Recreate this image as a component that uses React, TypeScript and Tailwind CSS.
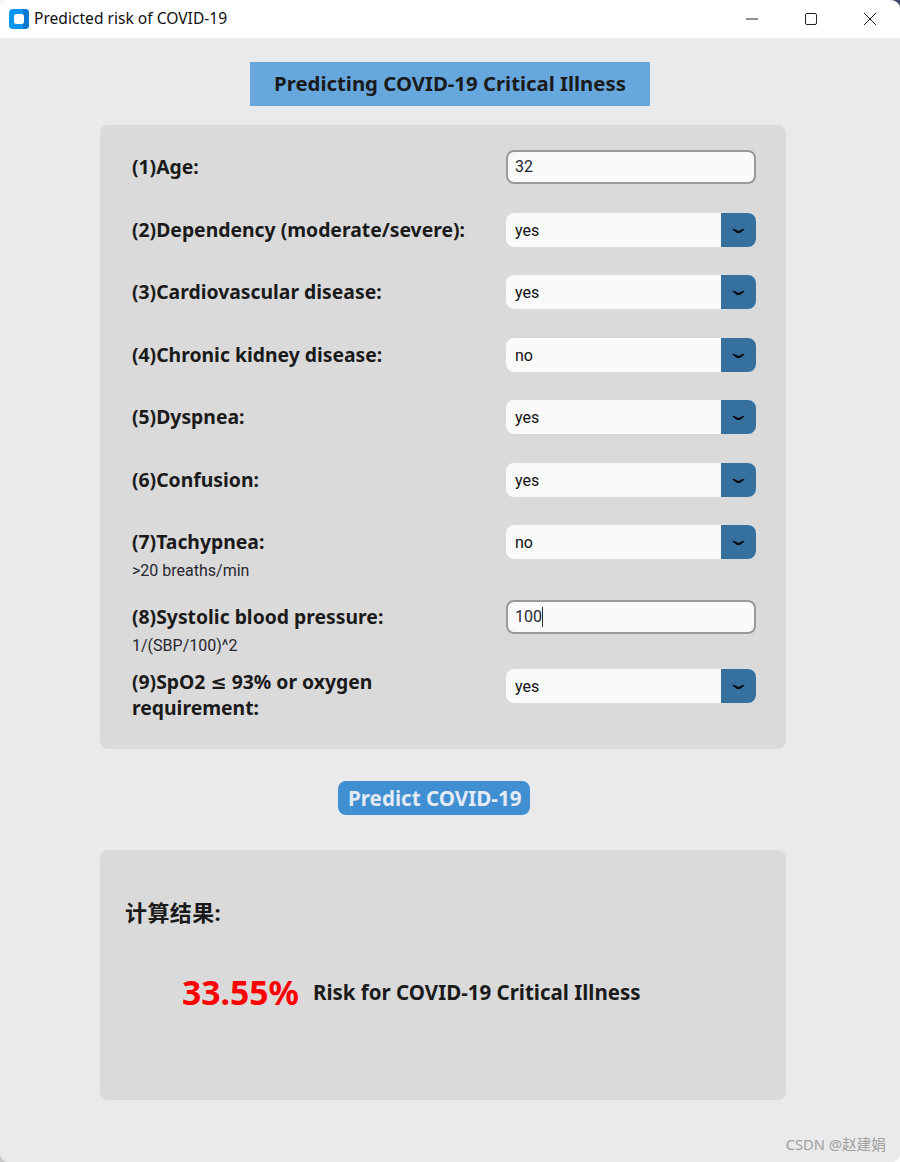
const yahei = 'font-["Noto_Sans","Noto_Sans_CJK_SC",sans-serif]';

const rows = [
  { label: '(1)Age:', kind: 'input', value: '32', h: 'h-[63px]' },
  { label: '(2)Dependency (moderate/severe):', kind: 'select', value: 'yes', h: 'h-[62px]' },
  { label: '(3)Cardiovascular disease:', kind: 'select', value: 'yes', h: 'h-[63px]' },
  { label: '(4)Chronic kidney disease:', kind: 'select', value: 'no', h: 'h-[62px]' },
  { label: '(5)Dyspnea:', kind: 'select', value: 'yes', h: 'h-[63px]' },
  { label: '(6)Confusion:', kind: 'select', value: 'yes', h: 'h-[62px]' },
  { label: '(7)Tachypnea:', note: '>20 breaths/min', kind: 'select', value: 'no', h: 'h-[75px]' },
  { label: '(8)Systolic blood pressure:', note: '1/(SBP/100)^2', kind: 'input', value: '100', caret: true, h: 'h-[69px]' },
];

function Field({ kind, value, caret }: { kind: string; value: string; caret?: boolean }) {
  if (kind === 'input') {
    return (
      <div className="w-[250px] h-[34px] shrink-0 bg-[#fafafa] border-2 border-[#9a9a9e] rounded-lg flex items-center pl-[7px] font-['Roboto',sans-serif] text-[16px] text-[#262730]">
        {value}
        {caret && <span className="w-px h-[20px] bg-[#333]" />}
      </div>
    );
  }
  return (
    <div className="w-[250px] h-[34px] shrink-0 bg-[#fafafa] rounded-lg flex overflow-hidden">
      <div className="flex-1 flex items-center pl-[9px] pt-[2px] font-['Roboto',sans-serif] text-[16px] text-[#111]">{value}</div>
      <div className="w-[35px] bg-[#36709f] flex items-center justify-center">
        <svg width="13" height="6" viewBox="0 0 13 6" fill="none" className="mt-[2px]">
          <path d="M0.5 0.5 L3.5 1.5 L6.5 3 L9.5 1.5 L12.5 0.5 L12 2 L8 5 L5 5 L1 2 Z" fill="#0a0a14" />
        </svg>
      </div>
    </div>
  );
}

export default function App() {
  return (
    <div className={`h-[1162px] bg-[#eaeaea] relative overflow-hidden ${yahei}`}>
      <div className="h-[38px] bg-white flex items-center">
        <svg width="20" height="20" viewBox="0 0 20 20" className="ml-[9px] mb-[1px]">
          <rect width="20" height="20" rx="4" fill="#0a94f2" />
          <path d="M16 0h0a4 4 0 0 1 4 4v12a4 4 0 0 1-4 4h-2V0z" fill="#0a78cf" />
          <rect x="5" y="5" width="10" height="10" rx="2.5" fill="#fff" />
        </svg>
        <span className="ml-[5px] text-[15.6px] text-[#111]">Predicted risk of COVID-19</span>
        <div className="ml-auto flex items-center">
          <svg width="12" height="12" viewBox="0 0 12 12" className="mr-[47px]"><path d="M0 6H12" stroke="#222" /></svg>
          <svg width="12" height="12" viewBox="0 0 12 12" className="mr-[47px]"><rect x=".5" y=".5" width="11" height="11" rx="1.5" fill="none" stroke="#222" /></svg>
          <svg width="12" height="12" viewBox="0 0 12 12" className="mr-[24px]"><path d="M0 0L12 12M12 0L0 12" stroke="#222" /></svg>
        </div>
      </div>

      <div className="flex justify-center mt-6">
        <div className="w-[400px] h-[44px] bg-[#66a8de] flex items-center justify-center pb-[2px] text-[20.35px] font-bold text-[#1a1a1a]">
          Predicting COVID-19 Critical Illness
        </div>
      </div>

      <div className="ml-[100px] w-[686px] mt-[19px] h-[624px] bg-[#dadada] rounded-lg pt-[25px] pl-[31px]">
        {rows.map((r) => (
          <div key={r.label} className={`flex ${r.h}`}>
            <div className="w-[375px] shrink-0 pl-px">
              <div className="text-[19.35px] font-bold leading-[26px] pt-1 text-[#1a1a1a]">{r.label}</div>
              {r.note && <div className="font-['Roboto',sans-serif] text-[16px] leading-5 mt-[6px] text-[#262730]">{r.note}</div>}
            </div>
            <Field kind={r.kind} value={r.value} caret={r.caret} />
          </div>
        ))}
        <div className="flex h-[80px]">
          <div className="w-[375px] shrink-0 pl-px pr-[100px]">
            <div className="font-['Noto_Sans','DejaVu_Sans',sans-serif] text-[19.35px] font-bold leading-[26px] text-[#1a1a1a]">
              (9)SpO2 ≤ 93% or oxygen requirement:
            </div>
          </div>
          <Field kind="select" value="yes" />
        </div>
      </div>

      <div className="ml-[338px] mt-[32px] w-[192px] h-[34px] bg-[#3f8fd2] rounded-lg flex items-center pl-[10px] text-[20.6px] font-bold text-[#e3eaf5]">
        Predict COVID-19
      </div>

      <div className="ml-[100px] w-[686px] mt-[35px] h-[250px] bg-[#dadada] rounded-lg pl-[25px] pt-[46px]">
        <div className="text-[22px] font-bold leading-[32px] tracking-[0.4px] text-[#1a1a1a]">计算结果:</div>
        <div className="flex items-center ml-[57px] mt-[40px] h-[48px]">
          <span className="text-[33.7px] font-bold text-[#ff0000]">33.55%</span>
          <span className="ml-[14px] text-[20.5px] font-bold text-[#1a1a1a]">Risk for COVID-19 Critical Illness</span>
        </div>
      </div>

      <div className="absolute right-[14px] bottom-[7px] text-[14.7px] text-[#a0a0a0]">CSDN @赵建娟</div>

      {/* window corners */}
      <svg width="8" height="8" viewBox="0 0 8 8" className="absolute left-0 top-0"><path d="M0 0H8A8 8 0 0 0 0 8Z" fill="#f4f4f4" /></svg>
      <svg width="10" height="8" viewBox="0 0 10 8" className="absolute right-0 top-0"><path d="M0 0H10V8A10 8 0 0 0 0 0Z" fill="#3d4a70" /></svg>
      <svg width="8" height="8" viewBox="0 0 8 8" className="absolute left-0 bottom-0"><path d="M0 0A8 8 0 0 0 8 8H0Z" fill="#c4c4c4" /></svg>
      <svg width="8" height="8" viewBox="0 0 8 8" className="absolute right-0 bottom-0"><path d="M8 0A8 8 0 0 1 0 8H8Z" fill="#ffffff" /></svg>
    </div>
  );
}
